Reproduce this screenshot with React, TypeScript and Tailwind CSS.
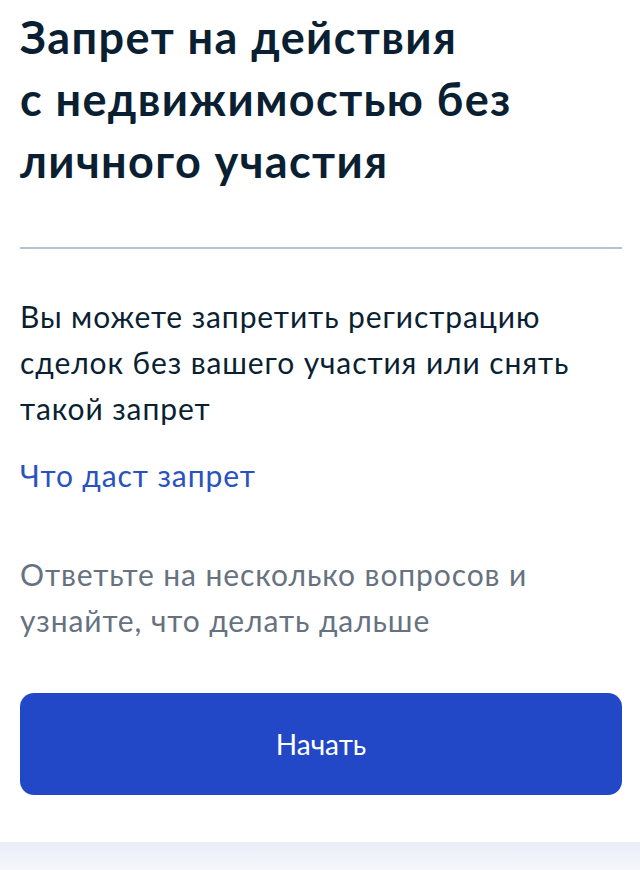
import React from 'react';

const font = { fontFamily: 'Lato, "Noto Sans", sans-serif' };

const App: React.FC = () => {
  return (
    <div className="min-h-[870px] bg-white flex flex-col" style={font}>
      <div className="flex-1 pl-5 pr-[18px]">
        <h1 className="pt-[6px] text-[45px] leading-[62px] font-bold tracking-[1.4px] text-[#0b1f33]">
          Запрет на действия
          <br />с недвижимостью без
          <br />
          личного участия
        </h1>

        <div className="mt-[55px] h-[2px] bg-[#b9c1cd]" />

        <p className="mt-[44px] text-[30px] leading-[46px] tracking-[0.9px] text-[#0b1f33]">
          Вы можете запретить регистрацию сделок без вашего участия или снять такой запрет
        </p>

        <a href="#" className="block mt-[21px] text-[30px] leading-[46px] tracking-[0.9px] text-[#2a52be]">
          Что даст запрет
        </a>

        <p className="mt-[53px] text-[30px] leading-[46px] tracking-[0.9px] text-[#66727f]">
          Ответьте на несколько вопросов и узнайте, что делать дальше
        </p>

        <button className="mt-[50px] w-full h-[102px] rounded-[14px] bg-[#2248c8] text-white text-[28px]">
          Начать
        </button>
      </div>

      <div className="h-[28px] bg-gradient-to-b from-[#eaedf6] to-[#f5f7fb]" />
    </div>
  );
};

export default App;
